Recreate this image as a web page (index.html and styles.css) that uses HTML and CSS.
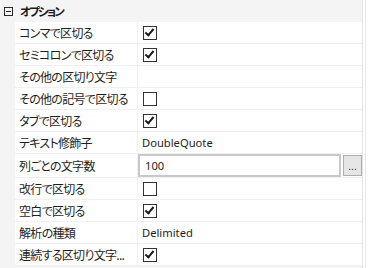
FILE: index.html
```html
<!DOCTYPE html>
<html lang="ja">
<head>
  <meta charset="UTF-8" />
  <title>オプション</title>
  <link rel="stylesheet" href="styles.css">
</head>
<body>
  <div class="grid">
    <div class="cat">
      <span class="toggle"></span>
      <span class="cat-title">オプション</span>
    </div>
    <div class="rows">
      <div class="row"><div class="name">コンマで区切る</div><div class="value"><span class="check on"></span></div></div>
      <div class="row"><div class="name">セミコロンで区切る</div><div class="value"><span class="check on"></span></div></div>
      <div class="row"><div class="name">その他の区切り文字</div><div class="value"></div></div>
      <div class="row"><div class="name">その他の記号で区切る</div><div class="value"><span class="check"></span></div></div>
      <div class="row"><div class="name">タブで区切る</div><div class="value"><span class="check on"></span></div></div>
      <div class="row"><div class="name">テキスト修飾子</div><div class="value">DoubleQuote</div></div>
      <div class="row edit"><div class="name">列ごとの文字数</div><div class="value"><div class="input">100</div><button class="dots">...</button></div></div>
      <div class="row"><div class="name">改行で区切る</div><div class="value"><span class="check"></span></div></div>
      <div class="row"><div class="name">空白で区切る</div><div class="value"><span class="check on"></span></div></div>
      <div class="row"><div class="name">解析の種類</div><div class="value">Delimited</div></div>
      <div class="row"><div class="name">連続する区切り文字...</div><div class="value"><span class="check on"></span></div></div>
    </div>
  </div>
</body>
</html>
```

FILE: styles.css
```css
body {
  margin: 0;
  background: #ffffff;
  font-family: "Noto Sans", "Noto Sans CJK JP", sans-serif;
  font-size: 12px;
  color: #1e1e1e;
}

.grid {
  width: 362px;
  border-right: 1px solid #e3e3e3;
  box-shadow: 2px 0 0 #ffffff, 3px 0 0 #e8e8e8;
  background: #f4f4f4;
  height: 268px;
}

.cat {
  height: 22px;
  display: flex;
  align-items: center;
  padding-left: 4px;
}

.toggle {
  width: 7px;
  height: 7px;
  border: 1px solid #2a2a2a;
  position: relative;
  margin-right: 7px;
}

.toggle::after {
  content: "";
  position: absolute;
  left: 1px;
  top: 3px;
  width: 5px;
  height: 1px;
  background: #2a2a2a;
}

.cat-title {
  font-weight: bold;
  font-size: 11.5px;
  letter-spacing: -1.8px;
  color: #1a1a1a;
  font-family: "Noto Sans CJK JP", sans-serif;
  font-feature-settings: "palt" 1;
}

.rows {
  padding-left: 15px;
}

.row {
  display: flex;
  height: 21px;
  background: #ffffff;
  border-bottom: 1px solid #f0f0f0;
}

.row.edit {
  height: 23px;
}

.name {
  width: 118px;
  padding-left: 4px;
  border-right: 1px solid #f0f0f0;
  display: flex;
  align-items: center;
  white-space: nowrap;
  overflow: hidden;
  font-family: "Noto Sans CJK JP", sans-serif;
  font-feature-settings: "palt" 1;
  letter-spacing: -0.7px;
}

.value {
  flex: 1;
  display: flex;
  align-items: center;
  padding-left: 4px;
  font-size: 11.2px;
}

.check {
  width: 12px;
  height: 12px;
  border: 1px solid #333333;
  background: #ffffff;
  position: relative;
  margin-left: 1px;
}

.check.on::after {
  content: "";
  position: absolute;
  left: 3px;
  top: 0px;
  width: 3px;
  height: 7px;
  border-right: 2px solid #1a1a1a;
  border-bottom: 2px solid #1a1a1a;
  transform: rotate(40deg);
}

.row.edit .value {
  padding-left: 0;
  align-items: stretch;
}

.input {
  flex: 1;
  border: 2px solid #c8c8c8;
  display: flex;
  align-items: center;
  padding-left: 5px;
}

.dots {
  width: 19px;
  margin: 1px 0 1px 2px;
  padding: 0 0 3px;
  border: 1px solid #adadad;
  background: #e6e6e6;
  font-family: "Liberation Sans", sans-serif;
  font-size: 10px;
  line-height: 1;
  display: flex;
  align-items: flex-end;
  justify-content: center;
  color: #1e1e1e;
}
```
